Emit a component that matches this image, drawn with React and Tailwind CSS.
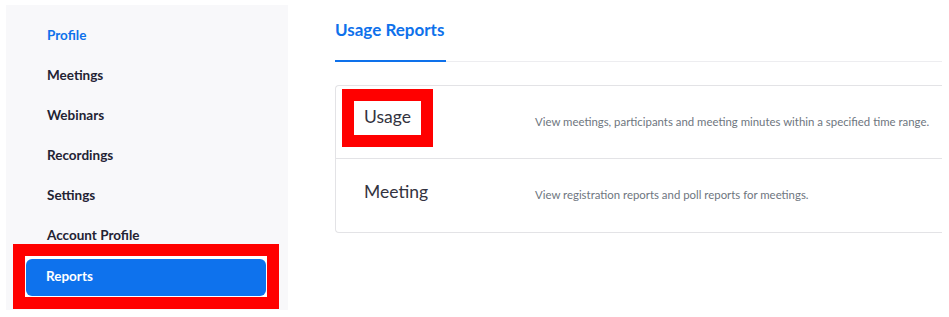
export default function App() {
  const items = ["Profile", "Meetings", "Webinars", "Recordings", "Settings", "Account Profile"];
  return (
    <div className="w-[949px] h-[317px] bg-white flex font-['Lato','Liberation_Sans',sans-serif] overflow-hidden">
      <div className="ml-[6px] mt-[5px] w-[282px] h-[305px] bg-[#f8f8fa] pt-[10px] flex flex-col">
        {items.map((t, i) => (
          <div
            key={t}
            className={`h-10 flex items-center pl-[41px] text-[13.5px] font-bold ${i === 0 ? "text-[#0e71eb]" : "text-[#232333]"}`}
          >
            {t}
          </div>
        ))}
        <div className="-mt-[11px] ml-[7px] w-[266px] h-[65px] border-[12px] border-[#ff0000] bg-white pt-[3px] px-[1px] pb-[1px]">
          <div className="h-[37px] rounded-[6px] bg-[#0e72ed] flex items-center pl-[20px] pb-[2px] text-[13.5px] font-bold text-white">
            Reports
          </div>
        </div>
      </div>
      <div className="ml-[47px] w-[607px] flex flex-col">
        <div className="h-[62px] border-b border-[#ededf0] flex">
          <div className="h-[62px] -mb-px border-b-2 border-[#0e71eb] flex items-center pb-[1px] text-[17px] font-bold text-[#0e71eb] w-[111px]">
            Usage Reports
          </div>
        </div>
        <div className="mt-[23px] border-l border-t border-b border-[#e3e3e6] rounded-l-[4px]">
          <div className="h-[73px] flex items-center border-b border-[#e3e3e6]">
            <div className="w-[199px] shrink-0 pb-[9px]">
              <div className="ml-[6px] w-[91px] h-[58px] border-[12px] border-[#ff0000] bg-white pl-[10px] flex items-center text-[17.5px] text-[#333340]">
                Usage
              </div>
            </div>
            <div className="text-[11.4px] text-[#6e7680] pb-[1px]">
              View meetings, participants and meeting minutes within a specified time range.
            </div>
          </div>
          <div className="h-[73px] flex items-center">
            <div className="w-[199px] shrink-0 pb-[7px] pl-[28px] text-[17.5px] text-[#333340]">Meeting</div>
            <div className="text-[11.4px] text-[#6e7680] pb-[1px]">
              View registration reports and poll reports for meetings.
            </div>
          </div>
        </div>
      </div>
    </div>
  );
}
